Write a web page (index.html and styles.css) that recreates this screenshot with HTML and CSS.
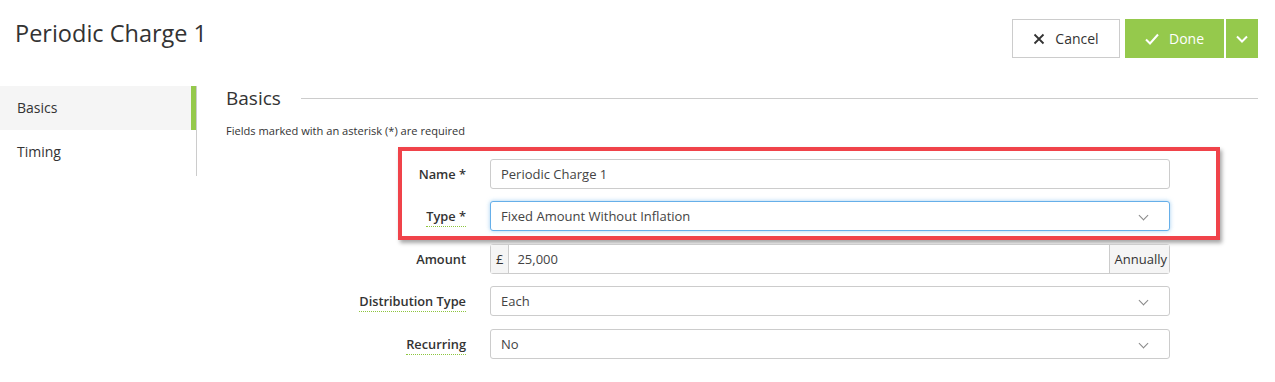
FILE: index.html
```html
<!DOCTYPE html>
<html lang="en">
<head>
    <meta charset="UTF-8">
    <title>Periodic Charge 1</title>
    <link rel="stylesheet" href="styles.css">
</head>
<body>
    <div class="page-header">
        <h1>Periodic Charge 1</h1>
        <div class="actions">
            <button class="btn btn-cancel">
                <svg width="12" height="12" viewBox="0 0 12 12"><path d="M1.5 1.5 L10.5 10.5 M10.5 1.5 L1.5 10.5" stroke="#333" stroke-width="1.8" fill="none"/></svg>
                Cancel
            </button>
            <div class="btn-group">
                <button class="btn btn-done">
                    <svg width="14" height="12" viewBox="0 0 14 12"><path d="M1 6.5 L5 10.5 L13 1.5" stroke="#fff" stroke-width="2" fill="none"/></svg>
                    Done
                </button>
                <button class="btn btn-toggle">
                    <svg width="12" height="8" viewBox="0 0 12 8"><path d="M1 1.5 L6 6.5 L11 1.5" stroke="#fff" stroke-width="2" fill="none"/></svg>
                </button>
            </div>
        </div>
    </div>

    <div class="main">
        <ul class="side-nav">
            <li class="active">Basics</li>
            <li>Timing</li>
        </ul>

        <div class="content">
            <div class="section-title">
                <h2>Basics</h2>
                <span class="rule"></span>
            </div>
            <p class="hint">Fields marked with an asterisk (*) are required</p>

            <div class="form">
                <div class="highlight"></div>

                <label class="form-label">Name *</label>
                <div class="control"><span>Periodic Charge 1</span></div>

                <label class="form-label"><span class="dotted">Type *</span></label>
                <div class="control focus select"><span>Fixed Amount Without Inflation</span></div>

                <label class="form-label">Amount</label>
                <div class="control input-group">
                    <span class="addon">£</span>
                    <span class="value">25,000</span>
                    <span class="addon addon-right">Annually</span>
                </div>

                <label class="form-label"><span class="dotted">Distribution Type</span></label>
                <div class="control select"><span>Each</span></div>

                <label class="form-label"><span class="dotted">Recurring</span></label>
                <div class="control select"><span>No</span></div>
            </div>
        </div>
    </div>
</body>
</html>
```

FILE: styles.css
```css
* {
    margin: 0;
    padding: 0;
    box-sizing: border-box;
}

body {
    font-family: 'Open Sans', 'Liberation Sans', sans-serif;
    color: #333;
    background: #fff;
    width: 1275px;
    height: 382px;
    overflow: hidden;
}

.page-header {
    display: flex;
    justify-content: space-between;
    align-items: flex-start;
    height: 86px;
    padding: 19px 17px 0 15px;
}

.page-header h1 {
    font-size: 23.5px;
    font-weight: 400;
    line-height: 28px;
    color: #333;
}

.actions {
    display: flex;
    gap: 5px;
}

.btn {
    font-family: 'Open Sans', 'Liberation Sans', sans-serif;
    font-size: 14px;
    height: 39px;
    border: none;
    display: flex;
    align-items: center;
    justify-content: center;
    gap: 10px;
    cursor: pointer;
}

.btn-cancel {
    width: 108px;
    background: #fff;
    border: 1px solid #ccc;
    color: #333;
}

.btn-group {
    display: flex;
    gap: 2px;
}

.btn-done {
    width: 99px;
    background: #95c94c;
    color: #fff;
}

.btn-toggle {
    width: 32px;
    background: #95c94c;
}

.main {
    display: flex;
}

.side-nav {
    list-style: none;
    width: 197px;
    height: 90px;
    border-right: 1px solid #ccc;
    flex-shrink: 0;
}

.side-nav li {
    height: 44px;
    line-height: 44px;
    padding-left: 17px;
    font-size: 14px;
    color: #333;
}

.side-nav li.active {
    background: #f5f5f5;
    border-right: 5px solid #95c94c;
}

.content {
    flex: 1;
    padding: 0 17px 0 29px;
}

.section-title {
    display: flex;
    align-items: center;
    gap: 20px;
    height: 24px;
}

.section-title h2 {
    font-size: 19px;
    font-weight: 400;
    color: #333;
}

.section-title .rule {
    flex: 1;
    border-top: 1px solid #ccc;
    margin-top: 1px;
}

.hint {
    font-size: 11.1px;
    color: #333;
    margin-top: 13px;
    line-height: 16px;
}

.form {
    position: relative;
    display: grid;
    grid-template-columns: 240px 680px;
    column-gap: 24px;
    row-gap: 12.5px;
    margin-top: 19.5px;
    align-items: center;
}

.form-label {
    text-align: right;
    font-size: 12.8px;
    font-weight: 600;
    color: #333;
}

.dotted {
    border-bottom: 1px dotted #8dc63f;
    padding-bottom: 1px;
}

.control {
    height: 30px;
    border: 1px solid #ccc;
    border-radius: 3px;
    font-size: 13px;
    color: #444;
    display: flex;
    align-items: center;
    padding-left: 10px;
    position: relative;
    background: #fff;
}

.control.focus {
    border-color: #66afe9;
    box-shadow: 0 0 4px rgba(102, 175, 233, 0.6);
}

.select::after {
    content: "";
    position: absolute;
    right: 22px;
    top: 10px;
    width: 6px;
    height: 6px;
    border-right: 1.5px solid #888;
    border-bottom: 1.5px solid #888;
    transform: rotate(45deg);
}

.input-group {
    padding-left: 0;
}

.input-group .addon {
    height: 100%;
    display: flex;
    align-items: center;
    padding: 0 5px;
    background: #f5f5f5;
    border-right: 1px solid #ccc;
    color: #333;
}

.input-group .value {
    flex: 1;
    padding-left: 8px;
}

.input-group .addon-right {
    border-right: none;
    border-left: 1px solid #ccc;
    padding: 0 2px 0 5px;
}

.highlight {
    position: absolute;
    left: 172px;
    top: -12px;
    width: 822px;
    height: 93px;
    border: 4px solid #f0434a;
    box-shadow: 2px 3px 4px rgba(0, 0, 0, 0.35);
    pointer-events: none;
}
```
